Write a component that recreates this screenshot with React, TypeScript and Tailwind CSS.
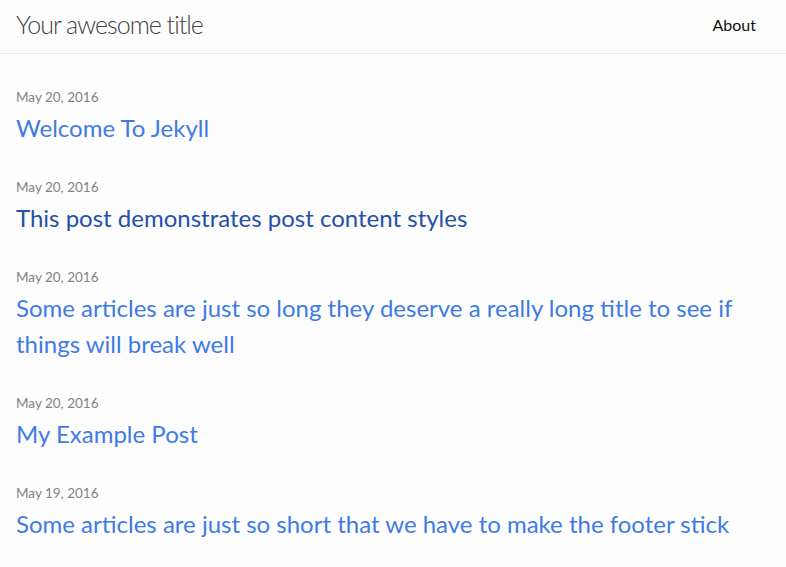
const posts = [
  { date: 'May 20, 2016', title: 'Welcome To Jekyll', visited: false },
  { date: 'May 20, 2016', title: 'This post demonstrates post content styles', visited: true },
  {
    date: 'May 20, 2016',
    title: 'Some articles are just so long they deserve a really long title to see if things will break well',
    visited: false,
  },
  { date: 'May 20, 2016', title: 'My Example Post', visited: false },
  { date: 'May 19, 2016', title: 'Some articles are just so short that we have to make the footer stick', visited: false },
];

export default function App() {
  return (
    <div className="min-h-screen bg-[#fdfdfd] text-[#111] font-['Lato',sans-serif]">
      <header className="h-[54px] border-b border-[#e8e8e8] flex items-center justify-between pl-4 pr-[30px] pb-[4px]">
        <a href="#" className="text-[25px] font-light tracking-[-1px] text-[#424242]">
          Your awesome title
        </a>
        <nav>
          <a href="#" className="text-[16px] text-[#111]">
            About
          </a>
        </nav>
      </header>

      <main className="pl-4 pr-[30px] pt-[32px]">
        <ul>
          {posts.map((post) => (
            <li key={post.title} className="mb-[30px]">
              <span className="block text-[13.5px] leading-[22px] text-[#828282]">{post.date}</span>
              <h3 className="mt-[2px]">
                <a
                  href="#"
                  className={
                    'block text-[24px] leading-[36px] ' +
                    (post.visited ? 'text-[#2550a8]' : 'text-[#3f7be5]')
                  }
                >
                  {post.title}
                </a>
              </h3>
            </li>
          ))}
        </ul>
      </main>
    </div>
  );
}
